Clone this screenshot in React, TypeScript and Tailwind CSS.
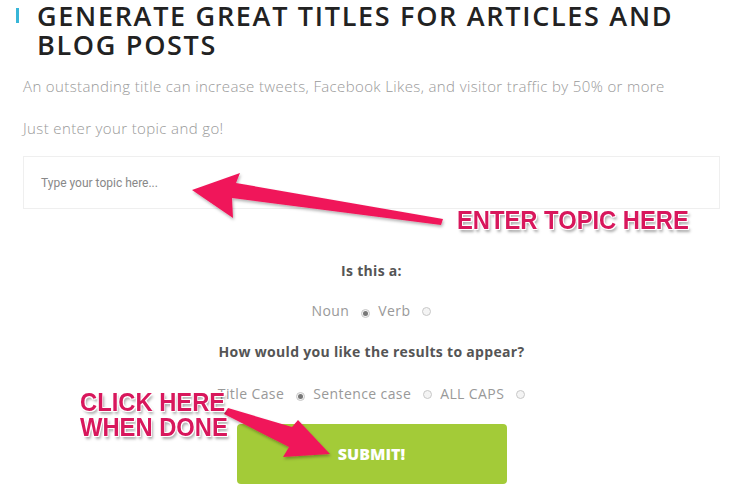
import React from 'react';

const annot = {
  fontFamily: '"Liberation Sans", Arial, sans-serif',
  textShadow:
    '-1px -1px 0 #fff, 1px -1px 0 #fff, -1px 1px 0 #fff, 1px 1px 0 #fff, 2px 3px 3px rgba(0,0,0,0.35)',
};

function Radio({ checked }: { checked?: boolean }) {
  return (
    <span className="inline-flex h-[9px] w-[9px] items-center justify-center rounded-full border border-[#c8c8c8] bg-[#f4f4f4]">
      {checked && <span className="h-[5px] w-[5px] rounded-full bg-[#777]" />}
    </span>
  );
}

export default function App() {
  return (
    <div className="relative h-[493px] w-[732px] overflow-hidden bg-white font-['Open_Sans',sans-serif]">
      {/* Heading */}
      <div className="flex pl-[16px] pt-[1px]">
        <span className="mt-[7px] h-[15px] w-[3px] shrink-0 bg-[#38b6d8]" />
        <h1 className="ml-[18px] whitespace-nowrap text-[27px] font-semibold uppercase leading-[29px] tracking-[1.7px] text-[#222]">
          Generate great titles for articles and
          <br />
          blog posts
        </h1>
      </div>

      <div className="mr-[12px] ml-[23px]">
        <p className="mt-[17px] text-[15px] font-light leading-[20px] tracking-[0.37px] text-[#999]">
          An outstanding title can increase tweets, Facebook Likes, and visitor traffic by 50% or more
        </p>
        <p className="mt-[22px] text-[15px] font-light leading-[20px] tracking-[0.37px] text-[#999]">
          Just enter your topic and go!
        </p>

        <div className="mt-[18px] flex h-[53px] items-center border border-[#efefef] pl-[17px]">
          <span className="font-['Roboto',sans-serif] text-[12px] text-[#888]">Type your topic here...</span>
        </div>

        <div className="mt-[53px] flex flex-col items-center text-[14px] text-[#999]">
          <p className="font-bold leading-[18px] tracking-[0.3px] text-[#555]">Is this a:</p>
          <div className="mt-[22px] flex items-center leading-[18px] tracking-[0.4px]">
            <span>Noun</span>
            <span className="mr-[8px] ml-[12px]"><Radio checked /></span>
            <span>Verb</span>
            <span className="ml-[12px]"><Radio /></span>
          </div>
          <p className="mt-[23px] font-bold leading-[18px] tracking-[0.3px] text-[#555]">How would you like the results to appear?</p>
          <div className="mt-[24px] flex items-center leading-[18px] tracking-[0.4px]">
            <span>Title Case</span>
            <span className="mr-[8px] ml-[12px]"><Radio checked /></span>
            <span>Sentence case</span>
            <span className="mr-[8px] ml-[12px]"><Radio /></span>
            <span>ALL CAPS</span>
            <span className="ml-[12px]"><Radio /></span>
          </div>
          <button
            type="button"
            className="mt-[21px] flex h-[60px] w-[270px] items-center justify-center rounded-[4px] bg-[#a3cb38] font-['Open_Sans',sans-serif] text-[16px] font-extrabold text-white"
          >
            SUBMIT!
          </button>
        </div>
      </div>

      {/* Annotation arrows */}
      <svg className="pointer-events-none absolute inset-0" width="732" height="493">
        <defs>
          <filter id="sh" x="-10%" y="-10%" width="130%" height="130%">
            <feDropShadow dx="1" dy="2" stdDeviation="1.5" floodColor="#000" floodOpacity="0.3" />
          </filter>
        </defs>
        <polygon
          points="192,190 240,173 236,183 443,219 441,225 232,198 233,218"
          fill="#f0185a"
          filter="url(#sh)"
        />
        <polygon
          points="228,408 292,427 298,420 330,454 283,457 289,447 224,414"
          fill="#f0185a"
          filter="url(#sh)"
        />
      </svg>

      <div
        className="absolute left-[457px] top-[207px] text-[25px] font-bold leading-[26px] text-[#d8175c]"
        style={annot}
      >
        <span className="inline-block origin-left scale-x-[0.95]">ENTER TOPIC HERE</span>
      </div>
      <div
        className="absolute left-[80px] top-[390px] text-[25px] font-bold leading-[25px] text-[#d8175c]"
        style={annot}
      >
        <span className="block origin-left scale-x-[0.95]">CLICK HERE</span>
        <span className="block origin-left scale-x-[0.95]">WHEN DONE</span>
      </div>
    </div>
  );
}
